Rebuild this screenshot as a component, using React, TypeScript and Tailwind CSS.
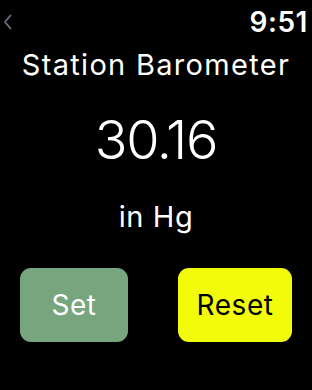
import React from 'react';

export default function App() {
  return (
    <div
      className="w-[312px] h-[390px] bg-black text-white flex flex-col"
      style={{ fontFamily: 'Inter, "Noto Sans", sans-serif' }}
    >
      {/* Status row */}
      <div className="flex items-center justify-between h-[42px] pl-[2px] pr-[4px] pt-[1px]">
        <svg width="11" height="18" viewBox="0 0 11 18" className="text-gray-500">
          <path d="M8.5 2.5 L3 9 L8.5 15.5" fill="none" stroke="currentColor" strokeWidth="1.8" strokeLinecap="round" strokeLinejoin="round" />
        </svg>
        <span className="text-[28px] font-semibold leading-none tracking-[0.02em]">9:51</span>
      </div>

      {/* Title */}
      <div className="text-center text-[29px] leading-none mt-[8px] tracking-[0.045em]">Station Barometer</div>

      {/* Reading */}
      <div className="text-center text-[54px] font-light leading-none mt-[34px] tracking-tight">30.16</div>
      <div className="text-center text-[29px] leading-none mt-[35px] tracking-[0.02em]">in Hg</div>

      {/* Buttons */}
      <div className="flex justify-between px-[20px] mt-[37px]">
        <button className="w-[108px] h-[74px] rounded-[11px] bg-[#76a57e] text-white text-[28px] tracking-[0.02em]">Set</button>
        <button className="w-[114px] h-[74px] rounded-[11px] bg-[#f2fc0a] text-black text-[28px] tracking-[0.02em]">Reset</button>
      </div>
    </div>
  );
}
